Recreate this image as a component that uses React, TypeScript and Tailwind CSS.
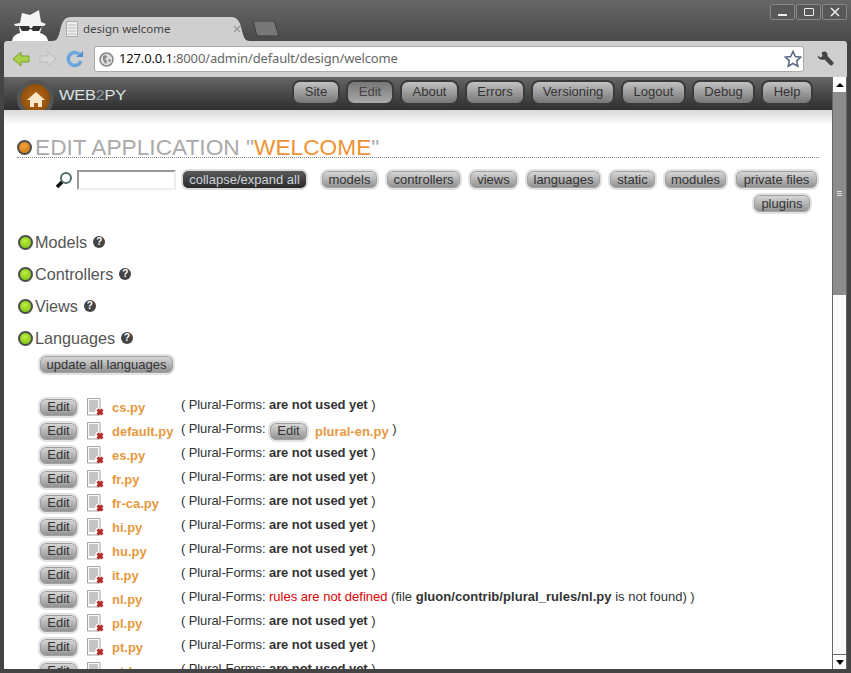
const navItems = [
  { label: 'Site', width: 'w-[48px]' },
  { label: 'Edit', width: 'w-[48px]', active: true },
  { label: 'About', width: 'w-[59px]' },
  { label: 'Errors', width: 'w-[60px]' },
  { label: 'Versioning', width: 'w-[84px]' },
  { label: 'Logout', width: 'w-[65px]' },
  { label: 'Debug', width: 'w-[63px]' },
  { label: 'Help', width: 'w-[52px]' },
];

const sections = [
  { label: 'models', width: 'w-[59px]' },
  { label: 'controllers', width: 'w-[77px]' },
  { label: 'views', width: 'w-[51px]' },
  { label: 'languages', width: 'w-[77px]' },
  { label: 'static', width: 'w-[49px]' },
  { label: 'modules', width: 'w-[65px]' },
  { label: 'private files', width: 'w-[85px]' },
];

const notUsed = 'unused';
const languages = [
  { file: 'cs.py', state: notUsed },
  { file: 'default.py', state: 'plural' },
  { file: 'es.py', state: notUsed },
  { file: 'fr.py', state: notUsed },
  { file: 'fr-ca.py', state: notUsed },
  { file: 'hi.py', state: notUsed },
  { file: 'hu.py', state: notUsed },
  { file: 'it.py', state: notUsed },
  { file: 'nl.py', state: 'missing' },
  { file: 'pl.py', state: notUsed },
  { file: 'pt.py', state: notUsed },
  { file: 'pt-br.py', state: notUsed },
];

const SmallButton = ({ label, className = '' }: { label: string; className?: string }) => (
  <button className={`h-[21px] shrink-0 rounded-[8px] border-2 border-[#e2e2e2] bg-gradient-to-b from-[#dcdcdc] to-[#8e8e8e] text-[13px] leading-[15px] text-[#333] shadow-[inset_0_0_0_1px_#a0a0a0] ${className}`}>
    {label}
  </button>
);

const Bullet = ({ color }: { color: 'green' | 'orange' }) => (
  <span className={`h-[15px] w-[15px] shrink-0 rounded-full border-[2px] border-[#4c4c4c] ${color === 'green' ? 'bg-[radial-gradient(circle_at_45%_35%,#bdf03f,#6fb90f)]' : 'bg-[radial-gradient(circle_at_45%_35%,#f5a43a,#c96e0c)]'}`} />
);

const HelpIcon = () => (
  <span className="ml-[6px] flex h-[12px] w-[12px] items-center justify-center rounded-full bg-[#444] text-[10px] font-bold leading-none text-white">?</span>
);

const FileIcon = () => (
  <svg width="17" height="19" viewBox="0 0 17 19" className="shrink-0">
    <path d="M.5.500h12.500v16.500H.5z" fill="#fafafa" stroke="#a5a5a5" />
    <path d="M2 3h9M2 5h9M2 7h9M2 9h9M2 11h7M2 13h6" stroke="#909090" />
    <path d="M10.500 11.500l5 5M15.500 11.500l-5 5" stroke="#b32b2b" strokeWidth="3" />
  </svg>
);

const Section = ({ label }: { label: string }) => (
  <div className="flex h-[32px] items-center pl-[1px]">
    <Bullet color="green" />
    <span className="ml-[2px] text-[16.2px] text-[#555]">{label}</span>
    <HelpIcon />
  </div>
);

const LanguageRow = ({ file, state }: { file: string; state: string }) => (
  <div className="flex h-[24px] shrink-0 items-center pl-[34px] text-[13px] text-[#333]">
    <SmallButton label="Edit" className="w-[41px] pb-[1px]" />
    <span className="ml-[8px] w-[25px]"><FileIcon /></span>
    <span className="w-[69px] translate-y-[1px] text-[13px] font-bold text-[#e8983f]">{file}</span>
    <div className="flex -translate-y-[2px] items-center whitespace-pre">
      <span className="tracking-[-0.1px]">( Plural-Forms: </span>
      {state === 'unused' && <span><b className="tracking-[-0.07px]">are not used yet</b> )</span>}
      {state === 'plural' && (
        <>
          <SmallButton label="Edit" className="-ml-[1px] w-[41px] translate-y-[2px] pb-[1px]" />
          <span className="ml-[6px] translate-y-[3px] font-bold text-[#e8983f]">plural-en.py</span>
          <span> )</span>
        </>
      )}
      {state === 'missing' && (
        <span>
          <span className="text-[#e00000]">rules are not defined</span> (file <b className="tracking-[0.05px]">gluon/contrib/plural_rules/nl.py</b> is not found) )
        </span>
      )}
    </div>
  </div>
);

const App = () => {
  return (
    <div className="flex h-[673px] w-[851px] flex-col overflow-hidden bg-[#444] font-['Liberation_Sans',sans-serif]">
      {/* title bar */}
      <div className="flex h-[41px] shrink-0 items-end bg-gradient-to-b from-[#676767] to-[#4a4a4a] pl-[9px]">
        <svg width="42" height="32" viewBox="0 0 42 32" className="shrink-0">
          <path d="M11 14l2-10 8 2 9-5 2 12 5 2-2 2H6l-1-2z" fill="#f4f4f4" />
          <path d="M3 32c1-6 5-7 8-8l-1-7h23l-2 7c3 1 7 2 8 8z" fill="#fff" />
          <path d="M10 17h10l1 2h2l1-2h9l-3 5h-6l-2-2h-1l-2 2h-6z" fill="#333" />
        </svg>
        <div className="relative ml-[1px] flex h-[24px] w-[198px] shrink-0 items-center pl-[14px]">
          <svg width="198" height="24" viewBox="0 0 198 24" className="absolute left-0 top-0">
            <path d="M0 24c5 0 6-3 8-10 2-9 4-14 11-14h160c7 0 9 5 11 14 2 7 3 10 8 10z" fill="#cfcfcf" />
          </svg>
          <svg width="12" height="16" viewBox="0 0 12 16" className="relative">
            <path d="M.5.500h11v15H.5z" fill="#eee" stroke="#aaa" />
            <path d="M2 4h8M2 7h8M2 10h8M2 13h8" stroke="#bbb" />
          </svg>
          <span className="relative ml-[5px] font-['Noto_Sans',sans-serif] text-[11.5px] text-[#444]">design welcome</span>
          <svg width="8" height="8" viewBox="0 0 8 8" className="absolute left-[181px] top-[8px]">
            <path d="M1 1l6 6M7 1L1 7" stroke="#999" strokeWidth="1.400" />
          </svg>
        </div>
        <svg width="28" height="16" viewBox="0 0 28 16" className="mb-[4px] ml-[2px] shrink-0">
          <path d="M1 0h19c2 0 3 2 4 6l3 9H7C5 15 4 12 3 7z" fill="#777" stroke="#3d3d3d" />
        </svg>
        <div className="mb-[21px] ml-auto mr-[4px] flex gap-[1px]">
          {['min', 'max', 'close'].map((name) => (
            <div key={name} className="flex h-[16px] w-[25px] items-center justify-center rounded-[2px] border border-[#888] bg-[#585858]">
              {name === 'min' && <span className="mt-[5px] h-[2px] w-[9px] bg-[#eee]" />}
              {name === 'max' && <span className="h-[8px] w-[10px] rounded-[1px] border-[1.500px] border-[#eee]" />}
              {name === 'close' && (
                <svg width="10" height="10" viewBox="0 0 10 10">
                  <path d="M1 1l8 8M9 1l-8 8" stroke="#eee" strokeWidth="1.500" />
                </svg>
              )}
            </div>
          ))}
        </div>
      </div>

      {/* browser toolbar */}
      <div className="mx-[4px] flex h-[36px] shrink-0 items-center rounded-t-[3px] bg-[#cfcfcf] pl-[8px] pr-[13px]">
        <svg width="18" height="18" viewBox="0 0 18 18" className="shrink-0">
          <path d="M1 9l8-7v4h8v6H9v4z" fill="#a9d24c" stroke="#7c9f2c" />
        </svg>
        <svg width="18" height="18" viewBox="0 0 18 18" className="ml-[9px] shrink-0">
          <path d="M17 9L9 2v4H1v6h8v4z" fill="#d6d6d6" stroke="#bdbdbd" />
        </svg>
        <svg width="18" height="18" viewBox="0 0 18 18" className="ml-[9px] shrink-0">
          <path d="M15 11a6.500 6.500 0 1 1-2-7" fill="none" stroke="#6ba5dc" strokeWidth="3.500" />
          <path d="M10 7h7V1z" fill="#4f8fd0" />
        </svg>
        <div className="ml-[10px] flex h-[26px] w-[710px] shrink-0 items-center rounded-[3px] border border-[#aaa] bg-white pl-[4px] font-['Noto_Sans',sans-serif] text-[13px] tracking-[-0.15px]">
          <svg width="15" height="15" viewBox="0 0 15 15" className="shrink-0">
            <circle cx="7.500" cy="7.500" r="6.500" fill="#ddd" stroke="#888" strokeWidth="1.500" />
            <path d="M4 4l3-1 1 2-2 2 2 2-1 3-2-2-1-3zM10 7l2 1-1 2-2-1z" fill="#888" />
          </svg>
          <span className="ml-[5px] text-[#111]">127.0.0.1</span>
          <span className="text-[#666]">:8000/admin/default/design/welcome</span>
          <svg width="18" height="18" viewBox="0 0 18 18" className="ml-auto mr-[1px]">
            <path d="M9 1.500l2.300 5 5.400.600-4 3.700 1.100 5.400L9 13.500 4.200 16.200l1.100-5.400-4-3.700 5.400-.600z" fill="#fff" stroke="#5b6b85" strokeWidth="1.600" />
          </svg>
        </div>
        <svg width="17" height="17" viewBox="0 0 17 17" className="ml-auto shrink-0">
          <path d="M.5 4.500L3.500 6.500 5.500 5 4.500 1.500 7 .5c2.500 0 4 2 3.500 4.500l6 6.500c.5 1.500-1.500 3.500-3 3L7.500 8.500C4 9.500 1 8 .5 4.500z" fill="#444" />
        </svg>
      </div>

      {/* page viewport */}
      <div className="mx-[4px] mb-[4px] flex min-h-0 flex-1 bg-white">
        <div className="flex min-w-0 flex-1 flex-col overflow-hidden">
          <div className="flex h-[33px] shrink-0 items-start bg-gradient-to-b from-[#666] to-[#2f2f2f] pl-[13px] pr-[19px] pt-[3px]">
            <span className="flex h-[37px] w-[37px] shrink-0 items-center justify-center rounded-full border-[4px] border-[#555] bg-[radial-gradient(circle,#b86c16,#7e4208)]">
              <svg width="18" height="16" viewBox="0 0 18 16">
                <path d="M9 1L0 9h3v7h4v-4h4v4h4V9h3z" fill="#fbe6cc" />
              </svg>
            </span>
            <span className="ml-[5px] mt-[4px] origin-left text-[15px] tracking-[-0.3px] text-[#d8e4e4] [transform:scaleX(1.1)]">WEB<span className="text-[#8a9aa0]">2</span>PY</span>
            <div className="ml-auto flex gap-[6px]">
              {navItems.map((item) => (
                <button
                  key={item.label}
                  className={`h-[25px] rounded-[8px] border-2 border-[#3a3a3a] pb-[2px] text-[13px] ${item.width} ${item.active ? 'bg-gradient-to-b from-[#777] to-[#aaa] text-[#444]' : 'bg-gradient-to-b from-[#c2c2c2] to-[#777] text-[#333]'}`}
                >
                  {item.label}
                </button>
              ))}
            </div>
          </div>
          <div className="h-[15px] shrink-0 bg-gradient-to-b from-[#d8d8d8] to-white" />

          <div className="px-[13px]">
            <div className="flex h-[33px] items-center border-b border-dotted border-[#888] pt-[13px]">
              <Bullet color="orange" />
              <h1 className="ml-[3px] text-[22.7px] leading-none text-[#aaa]">
                EDIT APPLICATION "<span className="text-[#ee9233]">WELCOME</span>"
              </h1>
            </div>

            <div className="mt-[11px] flex flex-wrap justify-end gap-x-[6px]">
              <div className="mr-[6px] flex items-center">
                <svg width="18" height="18" viewBox="0 0 18 18" className="mr-[4px]">
                  <circle cx="11" cy="7" r="5" fill="#fff" stroke="#50706c" strokeWidth="2" />
                  <path d="M7 11l-5 5" stroke="#111" strokeWidth="3.500" />
                </svg>
                <input className="h-[20px] w-[99px] border-2 border-[#eee] border-l-[#999] border-t-[#999] bg-white" />
                <button className="ml-[5px] h-[21px] w-[127px] rounded-[7px] border-2 border-[#ddd] bg-gradient-to-b from-[#5a5a5a] to-[#2a2a2a] text-[13px] leading-none text-[#cdd5dd]">collapse/expand all</button>
              </div>
              {sections.map((item) => (
                <SmallButton key={item.label} label={item.label} className={item.width} />
              ))}
              <div className="w-full" />
              <SmallButton label="plugins" className="mr-[7px] mt-[3px] w-[60px]" />
            </div>

            <div className="mt-[12px]">
              <Section label="Models" />
              <Section label="Controllers" />
              <Section label="Views" />
              <Section label="Languages" />
            </div>
          </div>

          <div className="flex pl-[34px]">
            <SmallButton label="update all languages" className="w-[137px] pb-[1px]" />
          </div>

          <div className="mt-[20px] flex flex-col">
            {languages.map((lang) => (
              <LanguageRow key={lang.file} file={lang.file} state={lang.state} />
            ))}
          </div>
        </div>

        {/* scrollbar */}
        <div className="flex w-[15px] shrink-0 flex-col border-x border-[#666] bg-[#fafafa]">
          <div className="flex h-[15px] shrink-0 items-center justify-center bg-white">
            <span className="border-x-[4px] border-b-[4px] border-x-transparent border-b-black" />
          </div>
          <div className="flex h-[203px] shrink-0 items-center justify-center bg-[#8c8c8c]">
            <span className="flex flex-col gap-[1px]">
              <span className="h-[1px] w-[5px] bg-[#ddd]" />
              <span className="h-[1px] w-[5px] bg-[#ddd]" />
              <span className="h-[1px] w-[5px] bg-[#ddd]" />
            </span>
          </div>
          <div className="flex-1" />
          <div className="flex h-[15px] shrink-0 items-center justify-center border-t border-[#666] bg-white">
            <span className="border-x-[4px] border-t-[5px] border-x-transparent border-t-black" />
          </div>
        </div>
      </div>
    </div>
  );
};

export default App;
